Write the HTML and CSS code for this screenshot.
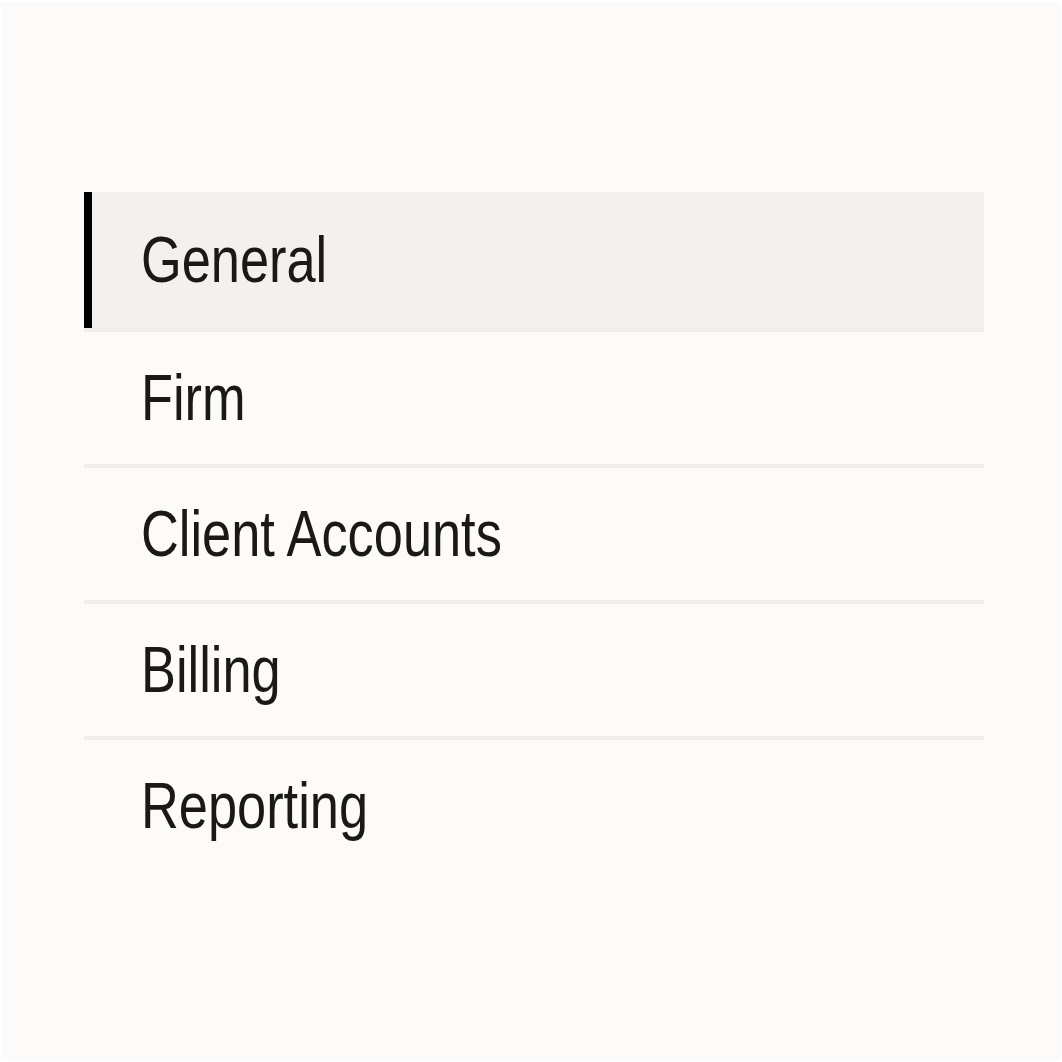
FILE: index.html
```html
<!DOCTYPE html>
<html lang="en">
<head>
  <meta charset="UTF-8">
  <title>Settings</title>
  <link rel="stylesheet" href="styles.css">
</head>
<body>

  <div class="settings-frame">
    <nav class="settings-nav">
      <a href="#" class="nav-item active"><span class="nav-label">General</span></a>
      <a href="#" class="nav-item"><span class="nav-label">Firm</span></a>
      <a href="#" class="nav-item"><span class="nav-label">Client Accounts</span></a>
      <a href="#" class="nav-item"><span class="nav-label">Billing</span></a>
      <a href="#" class="nav-item"><span class="nav-label">Reporting</span></a>
    </nav>
  </div>

</body>
</html>
```

FILE: styles.css
```css
body, html {
  margin: 0;
  padding: 0;
  background-color: #ffffff;
}

.settings-frame {
  box-sizing: border-box;
  width: 1062px;
  height: 1062px;
  padding: 190px 76px 0 83px;
  border: 1px solid #ffffff;
  border-top-width: 2px;
  background-color: #fcfbf9;
}

.settings-nav {
  display: flex;
  flex-direction: column;
  width: 900px;
}

.nav-item {
  display: flex;
  align-items: center;
  height: 132px;
  padding-left: 57px;
  border-bottom: 4px solid #f0eeeb;
  font-family: "Liberation Sans", Arial, sans-serif;
  font-size: 64px;
  color: #1b1915;
  text-decoration: none;
}

.nav-label {
  display: inline-block;
  transform: scaleX(0.818);
  transform-origin: left center;
  white-space: nowrap;
}

.nav-item:last-child {
  border-bottom: none;
}

.nav-item.active {
  height: 136px;
  background-color: #f3f0ed;
  box-shadow: inset 8px 0 0 #000000;
}
```
